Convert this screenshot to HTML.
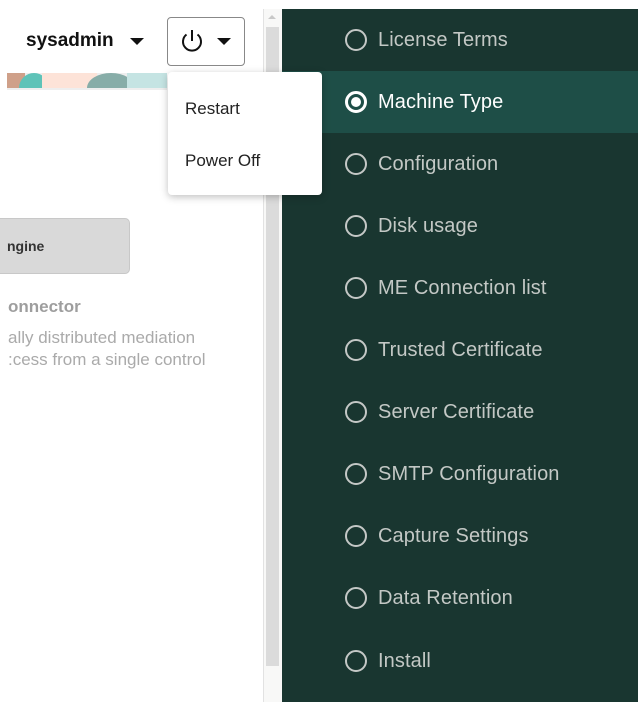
<!DOCTYPE html>
<html><head><style>
body{margin:0;width:638px;height:702px;overflow:hidden;background:#fff;font-family:"Liberation Sans",Arial,sans-serif;position:relative}
.abs{position:absolute}
.item{position:absolute;left:282px;width:356px;height:62px}
.item .c{position:absolute;left:63px;top:20px;width:18px;height:18px;border:2px solid #c4c8c6;border-radius:50%}
.item .t{position:absolute;left:96px;top:20px;font-size:20px;color:#c3c8c5;white-space:nowrap;letter-spacing:0.1px}
</style></head><body>
<div class="abs" style="left:26px;top:30px;font-size:19px;font-weight:bold;color:#111">sysadmin</div>
<div class="abs" style="left:130px;top:38px;width:0;height:0;border-left:7px solid transparent;border-right:7px solid transparent;border-top:7px solid #111"></div>
<div class="abs" style="left:167px;top:17px;width:78px;height:49px;border:1px solid #888;border-radius:4px;box-sizing:border-box"></div>
<svg class="abs" style="left:178px;top:27px" width="28" height="28" viewBox="0 0 28 28"><path d="M8.5 7.5A9 9 0 1 0 19.5 7.5" fill="none" stroke="#111" stroke-width="2"/><path d="M14 3V14" stroke="#111" stroke-width="2"/></svg>
<div class="abs" style="left:217px;top:38px;width:0;height:0;border-left:7px solid transparent;border-right:7px solid transparent;border-top:7px solid #111"></div>
<div class="abs" style="left:7px;top:73px;width:160px;height:17px;overflow:hidden;background:#eee">
<div class="abs" style="left:0;top:0;width:18px;height:17px;background:#cfa089"></div>
<div class="abs" style="left:12px;top:0;width:30px;height:30px;border-radius:50% 50% 0 0;background:#5ec3b8"></div>
<div class="abs" style="left:35px;top:0;width:55px;height:17px;background:#fde3d8"></div>
<div class="abs" style="left:80px;top:0;width:48px;height:30px;border-radius:50% 50% 0 0;background:#87ada8"></div>
<div class="abs" style="left:120px;top:0;width:45px;height:17px;background:#c5e4e3"></div>
</div>
<div class="abs" style="left:7px;top:88px;width:160px;height:2px;background:#eee"></div>
<div class="abs" style="left:0;top:218px;width:130px;height:56px;background:#d9d9d9;border:1px solid #c8c8c8;border-left:none;border-radius:0 5px 5px 0;box-sizing:border-box"></div>
<div class="abs" style="left:7px;top:238px;font-size:14px;font-weight:bold;color:#333">ngine</div>
<div class="abs" style="left:8px;top:297px;font-size:17px;font-weight:bold;color:#9e9e9e">onnector</div>
<div class="abs" style="left:8px;top:327px;font-size:17px;color:#aaa;line-height:22px">ally distributed mediation<br>:cess from a single control</div>
<div class="abs" style="left:263px;top:9px;width:1px;height:693px;background:#e2e2e2"></div>
<div class="abs" style="left:264px;top:9px;width:18px;height:693px;background:#f8f8f7"></div>
<div class="abs" style="left:266px;top:27px;width:13px;height:639px;background:#dbdbdb"></div>
<div class="abs" style="left:268px;top:15px;width:0;height:0;border-left:4px solid transparent;border-right:4px solid transparent;border-bottom:4px solid #c8c8c8"></div>
<div class="abs" style="left:282px;top:9px;width:356px;height:693px;background:#193630"></div>
<div class="abs" style="left:282px;top:71px;width:356px;height:62px;background:#1e4e47"></div>
<div class="item" style="top:9px"><div class="c"></div><div class="t">License Terms</div></div>
<div class="item" style="top:71px"><div class="c" style="border:3px solid #fff;width:16px;height:16px;left:63px;top:20px"><div style="position:absolute;left:3px;top:3px;width:10px;height:10px;border-radius:50%;background:#fff"></div></div><div class="t" style="color:#fff">Machine Type</div></div>
<div class="item" style="top:133px"><div class="c"></div><div class="t">Configuration</div></div>
<div class="item" style="top:195px"><div class="c"></div><div class="t">Disk usage</div></div>
<div class="item" style="top:257px"><div class="c"></div><div class="t">ME Connection list</div></div>
<div class="item" style="top:319px"><div class="c"></div><div class="t">Trusted Certificate</div></div>
<div class="item" style="top:381px"><div class="c"></div><div class="t">Server Certificate</div></div>
<div class="item" style="top:443px"><div class="c"></div><div class="t">SMTP Configuration</div></div>
<div class="item" style="top:505px"><div class="c"></div><div class="t">Capture Settings</div></div>
<div class="item" style="top:567px"><div class="c"></div><div class="t">Data Retention</div></div>
<div class="item" style="top:630px"><div class="c"></div><div class="t">Install</div></div>
<div class="abs" style="left:168px;top:72px;width:154px;height:123px;background:#fff;border-radius:4px;box-shadow:0 2px 8px rgba(0,0,0,.25)">
<div class="abs" style="left:17px;top:27px;font-size:17px;color:#222">Restart</div>
<div class="abs" style="left:17px;top:79px;font-size:17px;color:#222">Power Off</div>
</div>
</body></html>
